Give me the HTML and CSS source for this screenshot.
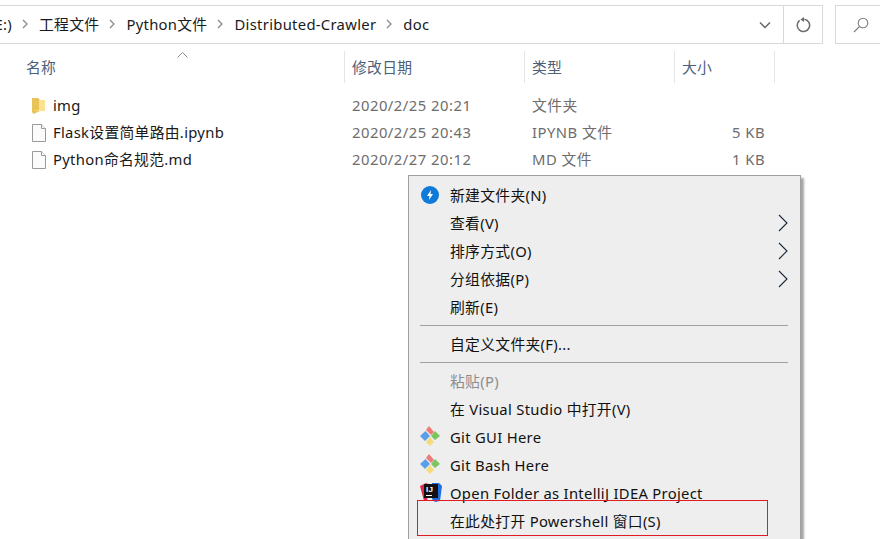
FILE: index.html
```html
<!DOCTYPE html>
<html lang="zh">
<head>
<meta charset="utf-8">
<title>doc</title>
<link rel="stylesheet" href="styles.css">
</head>
<body>
<div class="window">
  <div class="toolbar">
    <div class="address">
      <div class="crumbs">
        <div class="crumb-cut"><span>E:)</span></div>
        <svg class="sep" viewBox="0 0 6 10"><path d="M1 1l4 4-4 4"/></svg>
        <span class="crumb">工程文件</span>
        <svg class="sep" viewBox="0 0 6 10"><path d="M1 1l4 4-4 4"/></svg>
        <span class="crumb">Python文件</span>
        <svg class="sep" viewBox="0 0 6 10"><path d="M1 1l4 4-4 4"/></svg>
        <span class="crumb">Distributed-Crawler</span>
        <svg class="sep" viewBox="0 0 6 10"><path d="M1 1l4 4-4 4"/></svg>
        <span class="crumb">doc</span>
      </div>
      <div class="drop"><svg viewBox="0 0 12 8"><path d="M1 1.500l5 5 5-5"/></svg></div>
      <div class="refresh"><svg viewBox="0 0 16 16"><path d="M9.500 2.200A6.200 6.200 0 1 1 4.600 3.400"/><path class="fillp" d="M9 0v5l-3.600-2.500z"/></svg></div>
    </div>
    <div class="search"><svg viewBox="0 0 16 16"><circle cx="10" cy="6" r="4.800"/><path d="M6.500 9.500L1 15"/></svg></div>
  </div>

  <div class="list">
    <div class="head">
      <div class="col-name hcell">名称<svg class="sort" viewBox="0 0 11 6"><path d="M.5 5.500l5-5 5 5"/></svg></div>
      <div class="col-date hcell">修改日期</div>
      <div class="col-type hcell">类型</div>
      <div class="col-size hcell">大小</div>
    </div>
    <div class="row">
      <div class="col-name name"><svg class="ficon" viewBox="0 0 16 18"><path class="folder-b" d="M1 1h6l2 2v11l-6.500 3L1 15z"/><path class="folder-f" d="M8 3h6v11H3l5-1z"/></svg>img</div>
      <div class="col-date meta">2020/2/25 20:21</div>
      <div class="col-type meta">文件夹</div>
      <div class="col-size meta"></div>
    </div>
    <div class="row">
      <div class="col-name name"><svg class="ficon" viewBox="0 0 16 18"><path class="doc" d="M1.500.5h9l4 4v13h-13z"/><path class="doc" d="M10.500.5v4h4"/></svg>Flask设置简单路由.ipynb</div>
      <div class="col-date meta">2020/2/25 20:43</div>
      <div class="col-type meta">IPYNB 文件</div>
      <div class="col-size meta">5 KB</div>
    </div>
    <div class="row">
      <div class="col-name name"><svg class="ficon" viewBox="0 0 16 18"><path class="doc" d="M1.500.5h9l4 4v13h-13z"/><path class="doc" d="M10.500.5v4h4"/></svg>Python命名规范.md</div>
      <div class="col-date meta">2020/2/27 20:12</div>
      <div class="col-type meta">MD 文件</div>
      <div class="col-size meta">1 KB</div>
    </div>
  </div>
</div>

<div class="menu">
  <div class="item">
    <svg class="micon" viewBox="0 0 18 18"><circle class="bolt-bg" cx="9" cy="9" r="9"/><path class="bolt" d="M10 4L6 10h2.500L8 14l4-6H9.500z"/></svg>
    新建文件夹(N)
  </div>
  <div class="item">查看(V)<svg class="arrow" viewBox="0 0 10 18"><path d="M1 1l8 8-8 8"/></svg></div>
  <div class="item">排序方式(O)<svg class="arrow" viewBox="0 0 10 18"><path d="M1 1l8 8-8 8"/></svg></div>
  <div class="item">分组依据(P)<svg class="arrow" viewBox="0 0 10 18"><path d="M1 1l8 8-8 8"/></svg></div>
  <div class="item">刷新(E)</div>
  <div class="divider"></div>
  <div class="item">自定义文件夹(F)...</div>
  <div class="divider"></div>
  <div class="item disabled">粘贴(P)</div>
  <div class="item">在 Visual Studio 中打开(V)</div>
  <div class="item">
    <svg class="micon git" viewBox="0 0 20 20"><path class="g-blue" d="M5.500 5L0 10l5 5 5-5z"/><path class="g-red" d="M9 0L6 4l5 5 3-3z"/><path class="g-green" d="M15 5l-4 5 4 4 5-4z"/><path class="g-yellow" d="M10 11l-4 5 4 4 4-4z"/></svg>
    Git GUI Here
  </div>
  <div class="item">
    <svg class="micon git" viewBox="0 0 20 20"><path class="g-blue" d="M5.500 5L0 10l5 5 5-5z"/><path class="g-red" d="M9 0L6 4l5 5 3-3z"/><path class="g-green" d="M15 5l-4 5 4 4 5-4z"/><path class="g-yellow" d="M10 11l-4 5 4 4 4-4z"/></svg>
    Git Bash Here
  </div>
  <div class="item">
    <svg class="micon idea" viewBox="0 0 22 20"><path class="i-red" d="M0 4l6-3 5 2-4 15-3 1z"/><path class="i-blue" d="M12 1h7l3 3-2 15-5 1-3-3z"/><rect class="i-black" x="4" y="2" width="14" height="14"/><rect class="i-line" x="6" y="13" width="6" height="1"/><text class="i-text" x="6" y="10">IJ</text></svg>
    Open Folder as IntelliJ IDEA Project
  </div>
  <div class="item">在此处打开 Powershell 窗口(S)</div>
</div>
<div class="mark"></div>
</body>
</html>
```
FILE: styles.css
```css
* { box-sizing: border-box; }
html, body { margin: 0; height: 100%; overflow: hidden; background: #fff; }
body {
  position: relative;
  font-family: "Noto Sans", "Noto Sans CJK SC", sans-serif;
  font-size: 14.8px;
  letter-spacing: .3px;
  color: #1a1a1a;
}
.window { display: flex; flex-direction: column; }

.toolbar { display: flex; height: 44px; padding-top: 5px; gap: 12px; }
.address {
  width: 823px; height: 39px; flex: none; display: flex; align-items: center;
  border: 1px solid #d9d9d9; border-left: 0;
}
.crumbs { flex: 1; display: flex; align-items: center; overflow: hidden; white-space: nowrap; height: 34px; margin-bottom: 2px; }
.crumb-cut { width: 12px; flex: none; display: flex; justify-content: flex-end; overflow: hidden; }
.crumb-cut span { flex: none; }
.crumb { flex: none; }
.sep { width: 6px; height: 10px; flex: none; margin: 0 11px 0 10px; fill: none; stroke: #8a8a8a; stroke-width: 1.300; }
.drop { width: 50px; flex: none; display: flex; justify-content: center; padding-left: 14px; }
.drop svg { width: 12px; height: 8px; fill: none; stroke: #666; stroke-width: 1.500; }
.refresh { width: 39px; height: 37px; flex: none; border-left: 1px solid #d9d9d9; display: flex; align-items: center; justify-content: center; }
.refresh svg { width: 16px; height: 16px; fill: none; stroke: #6b6b6b; stroke-width: 1.500; }
.refresh .fillp { fill: #6b6b6b; stroke: none; }
.search { flex: 1; height: 39px; border: 1px solid #d9d9d9; border-right: 0; display: flex; align-items: center; padding-left: 17px; }
.search svg { width: 16px; height: 16px; fill: none; stroke: #7f7f7f; stroke-width: 1.100; }

.list { padding-left: 3px; }
.head { display: flex; height: 32px; margin-top: 7px; }
.hcell { color: #4c607a; height: 32px; line-height: 33px; border-right: 1px solid #e5e5e5; position: relative; }
.col-name { width: 342px; padding-left: 23px; flex: none; }
.col-date { width: 180px; padding-left: 7px; flex: none; }
.col-type { width: 150px; padding-left: 7px; flex: none; }
.col-size { width: 100px; padding-left: 7px; flex: none; }
.sort { position: absolute; left: 174px; top: 1px; width: 11px; height: 6px; fill: none; stroke: #8c8c8c; }
.row { display: flex; height: 27px; line-height: 27px; white-space: nowrap; }
.head + .row { margin-top: 9px; }
.name { display: flex; align-items: center; padding-left: 28px; gap: 6px; color: #1a1a1a; }
.ficon { width: 16px; height: 18px; flex: none; }
.folder-b { fill: #e8c35a; }
.folder-f { fill: #fce28f; }
.doc { fill: #fbfbfb; stroke: #9a9a9a; }
.meta { color: #6d6d6d; letter-spacing: .5px; }
.row .col-size { text-align: right; padding-right: 10px; }

.menu {
  position: absolute; left: 408px; top: 175px; width: 393px; height: 380px;
  background: #eeeeee; border: 1px solid #a0a0a0; padding-top: 5px;
  box-shadow: 3px 3px 2px rgba(0, 0, 0, .35);
}
.item { position: relative; height: 28px; line-height: 28px; padding-left: 41px; color: #111; white-space: nowrap; }
.disabled { color: #8d8d8d; }
.divider { height: 9px; margin: 0 12px 0 11px; position: relative; }
.divider::after { content: ""; position: absolute; left: 0; right: 0; top: 4px; height: 1px; background: #a0a0a0; }
.micon { position: absolute; left: 12px; top: 5px; width: 18px; height: 18px; }
.micon.git { width: 20px; height: 20px; left: 11px; top: 3px; }
.micon.idea { width: 22px; height: 20px; left: 11px; top: 3px; }
.bolt-bg { fill: #0f7ad8; }
.bolt { fill: #fff; }
.g-blue { fill: #5a9ee8; }
.g-red { fill: #ef7a7a; }
.g-green { fill: #7cc45e; }
.g-yellow { fill: #f5dc78; }
.i-red { fill: #e8264f; }
.i-blue { fill: #1f6fe0; }
.i-black { fill: #111; }
.i-line { fill: #fff; }
.i-text { fill: #fff; font-size: 8px; font-weight: 700; font-family: "Liberation Sans", sans-serif; }
.arrow { position: absolute; left: 369px; top: 5px; width: 10px; height: 18px; fill: none; stroke: #1b2a3a; stroke-width: 1.100; }

.mark { position: absolute; left: 417px; top: 500px; width: 351px; height: 36px; border: 1px solid #e01b24; }
```
